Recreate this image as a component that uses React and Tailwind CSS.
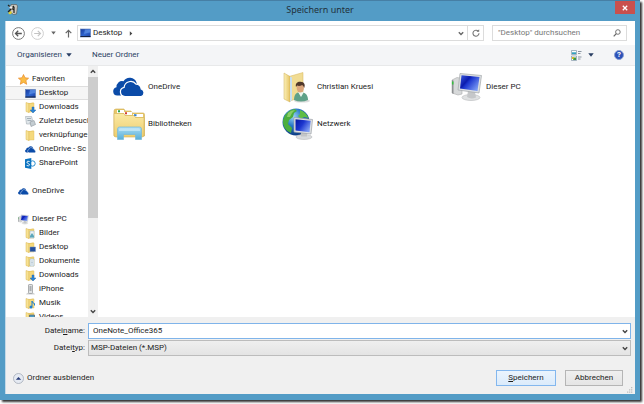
import { useState } from "react";

function Cloud({ className }) {
  return (
    <svg viewBox="0 0 32 20" className={className} aria-hidden="true">
      <path d="M8 18.500H4.200A4.200 4.200 0 0 1 .2 14.500 4.200 4.200 0 0 1 3.500 10.300 5.600 5.600 0 0 1 10.500 4.200 7.200 7.200 0 0 1 23.500 5.500L24 8 14 14Z" fill="#0b4ba8" />
      <path d="M12 19.500a4.600 4.600 0 0 1-.9-9.100 6.600 6.600 0 0 1 11.900-3.200A5.400 5.400 0 0 1 28.200 12a3.900 3.900 0 0 1 0 7.500Z" fill="#0b4ba8" stroke="#fff" strokeWidth="1.200" />
    </svg>
  );
}

function ScreenIcon({ className }) {
  return (
    <svg viewBox="0 0 11 10" className={className} aria-hidden="true">
      <defs>
        <linearGradient id="screen" x1="0" y1="0" x2="1" y2="1">
          <stop offset="0" stopColor="#173a9c" />
          <stop offset=".55" stopColor="#2f66d0" />
          <stop offset="1" stopColor="#1c3f9f" />
        </linearGradient>
      </defs>
      <rect x=".5" y="1" width="10" height="8" fill="url(#screen)" stroke="#5a7ab5" strokeWidth=".6" />
      <path d="M5 1.500h5.200v3Q7 4.500 4 6Z" fill="#5f93e6" opacity=".7" />
      <path d="M.5 8.500h10" stroke="#16233f" />
    </svg>
  );
}

function Folder({ children }) {
  return (
    <svg viewBox="0 0 11 11" className="h-full w-full" aria-hidden="true">
      <path d="M3 1.500 8.500.5v9L3 10.500Z" fill="#e9c65e" />
      <path d="M1 .5 4 1.500v9L1 9.500Z" fill="#f8e294" stroke="#d9b450" strokeWidth=".5" />
      <path d="M4 1.500 9 1v9H4Z" fill="#f5d97d" stroke="#dcb956" strokeWidth=".4" />
      {children}
    </svg>
  );
}

function PcIcon({ className }) {
  return (
    <svg viewBox="0 0 32 30" className={className} aria-hidden="true">
      <defs>
        <linearGradient id="pc" x1="0" y1="0" x2="1" y2=".7">
          <stop offset="0" stopColor="#3d5be0" />
          <stop offset=".4" stopColor="#0b1cae" />
          <stop offset=".5" stopColor="#1c36cf" />
          <stop offset="1" stopColor="#7b9bf4" />
        </linearGradient>
      </defs>
      <path d="m1 8 5-2.500 5 1V22l-4 1-6-2Z" fill="#d7d9da" stroke="#a9abad" strokeWidth=".6" />
      <path d="m1 8 1.500.5V22L1 21Z" fill="#8d9092" />
      <path d="M1.700 9.500v3" stroke="#33c23c" strokeWidth="1.500" />
      <ellipse cx="20" cy="25.500" rx="9" ry="3" fill="#dfe1e2" stroke="#b5b7b9" strokeWidth=".6" />
      <path d="m17 19 7 1 1 5.500q-5 2-9-.5Z" fill="#c5c7c9" />
      <path d="m9 1.500 21.500 2L28 21 7 18Z" fill="#dcdfe2" stroke="#a3a7ab" strokeWidth=".7" />
      <path d="m10.500 3.200 18 1.800-2 14L9 16.500Z" fill="url(#pc)" />
    </svg>
  );
}

function BigFolderUser() {
  return (
    <svg viewBox="0 0 32 32" className="h-8 w-8" aria-hidden="true">
      <defs>
        <linearGradient id="fold" x1="0" y1="0" x2="1" y2="0">
          <stop offset="0" stopColor="#fbf0b9" />
          <stop offset="1" stopColor="#e7c564" />
        </linearGradient>
      </defs>
      <path d="M7 5.500 21 1.500v24L8 30Z" fill="#f1dc93" stroke="#d6b65c" strokeWidth=".5" />
      <path d="m2 2 6 3.500V31l-6-3Z" fill="url(#fold)" stroke="#cfae54" strokeWidth=".5" />
      <path d="m8 5.500 2 1v22.500L8 31Z" fill="#c8dff0" />
      <ellipse cx="20" cy="30" rx="8" ry="1.600" fill="#c5c5c5" opacity=".6" />
      <path d="M12 29c0-6 3-8 6.500-8s7.500 2 7.500 8q-7 3-14 0Z" fill="#5fa188" />
      <path d="m16 21 3 5 3-5Z" fill="#eef5ee" />
      <ellipse cx="18.300" cy="17" rx="3.600" ry="4.600" fill="#dca67c" />
      <path d="M14 16c-1-4 2-5.500 4.500-5.200 4 .2 5 3 3.700 6.200q-.7-2-2-3-3 1.500-5 .5Z" fill="#51382a" />
    </svg>
  );
}

function LibrariesIcon() {
  return (
    <svg viewBox="0 0 32 32" className="h-8 w-8" aria-hidden="true">
      <defs>
        <linearGradient id="lib" x1="0" y1="0" x2="0" y2="1">
          <stop offset="0" stopColor="#fae9a4" />
          <stop offset="1" stopColor="#edcd6e" />
        </linearGradient>
        <linearGradient id="stand" x1="0" y1="0" x2="0" y2="1">
          <stop offset="0" stopColor="#a9dcf3" />
          <stop offset="1" stopColor="#58afd8" />
        </linearGradient>
      </defs>
      <path d="M1 3q0-2 2-2h8l1 2h6l1 2h11q1.500 0 1.500 1.500V28H1Z" fill="#e8c76a" stroke="#cfac4e" strokeWidth=".6" />
      <path d="M4 2h7v3H4Zm7 2h8v3h-8Zm9 2h10v3H20Z" fill="#fff" />
      <path d="M5 2.200h2v2H5Z" fill="#2da44a" />
      <path d="M12 4.200h2v2h-2Z" fill="#d33b30" />
      <path d="M21 6.200h2.500v2H21Z" fill="#2d7fd2" />
      <path d="M1 5.500h10l1 2h9l1.500 2H31V27q0 2-2 2H3q-2 0-2-2Z" fill="url(#lib)" stroke="#d4b35b" strokeWidth=".6" />
      <path d="M4.500 21q0-2 2-2h20q2 0 2 2v10.500h-6V26.500h-12v5h-6Z" fill="url(#stand)" stroke="#75b9d9" strokeWidth=".7" />
      <path d="M6 21.500q0-1.200 1.500-1.200h18q1.500 0 1.500 1.200V23H6Z" fill="#d6f0fb" opacity=".6" />
    </svg>
  );
}

function NetworkIcon() {
  return (
    <svg viewBox="0 0 32 32" className="h-8 w-8" aria-hidden="true">
      <defs>
        <radialGradient id="globe" cx=".4" cy=".3" r=".75">
          <stop offset="0" stopColor="#9bd4f6" />
          <stop offset=".45" stopColor="#2777c8" />
          <stop offset="1" stopColor="#0a3478" />
        </radialGradient>
        <linearGradient id="net" x1="0" y1="0" x2="1" y2=".6">
          <stop offset="0" stopColor="#0816a0" />
          <stop offset=".5" stopColor="#1c36cf" />
          <stop offset="1" stopColor="#7f9df3" />
        </linearGradient>
      </defs>
      <circle cx="14" cy="14" r="13.500" fill="url(#globe)" />
      <path d="M3 7q5-6 10-6l2 2-3 2-1 4-4 3-1 4 4 4-1 5Q0 21 1 12Z" fill="#4cae3d" />
      <path d="M18 2q6 2 8.500 8L22 9l-3 2-3-3 2-2Z" fill="#5fbd45" />
      <path d="M6 5q3-3 7-3l-3 3-2 4-3 0Z" fill="#a2da79" opacity=".7" />
      <ellipse cx="22" cy="29" rx="8" ry="2.500" fill="#d9dbdd" stroke="#b1b3b5" strokeWidth=".5" />
      <path d="m19 24 6 .5v4h-6Z" fill="#c3c5c7" />
      <path d="m12 9.500 18.500 2L29 26l-17-2Z" fill="#dfe2e5" stroke="#9ca0a6" strokeWidth=".7" />
      <path d="m13.500 11.200 15.200 1.600-1.200 11.400-14-1.700Z" fill="url(#net)" />
    </svg>
  );
}

function Star() {
  return (
    <svg viewBox="0 0 11 11" className="h-full w-full" aria-hidden="true">
      <path d="m5.500.5 1.500 3.300 3.600.4-2.700 2.400.8 3.700-3.200-1.900-3.200 1.900.8-3.700L.4 4.200 4 3.800Z" fill="#fbbd45" stroke="#e88a2a" strokeWidth=".7" />
    </svg>
  );
}

function Recent() {
  return (
    <svg viewBox="0 0 11 11" className="h-full w-full" aria-hidden="true">
      <path d="M.5.500h6l1 3.500-1 4H1.500Z" fill="#dfe6ea" stroke="#a5adb3" strokeWidth=".6" />
      <path d="M2 2.500h4m-3.500 2h4" stroke="#8b98a2" strokeWidth=".7" />
      <path d="m5 6 4-1.500 1.500 4L6 10.500Z" fill="#c4cdd2" stroke="#8d969c" strokeWidth=".6" />
    </svg>
  );
}

function SharePoint() {
  return (
    <svg viewBox="0 0 11 11" className="h-full w-full" aria-hidden="true">
      <circle cx="7.500" cy="5.500" r="2.700" fill="none" stroke="#2b8fd0" />
      <path d="M0 1.200 6.300 0v11L0 9.800Z" fill="#0d74c0" />
      <path d="M4.600 3.500Q2 2.600 1.900 4.100q0 1 1.400 1.500 1.500.6 1.200 1.500-.5 1.200-2.800.4" fill="none" stroke="#fff" strokeWidth=".9" />
    </svg>
  );
}

function Phone() {
  return (
    <svg viewBox="0 0 11 11" className="h-full w-full" aria-hidden="true">
      <path d="M2 9h7l1 1.500H1Z" fill="#d2d4d5" />
      <rect x="3.500" y=".5" width="4" height="9" rx=".7" fill="#e2e4e5" stroke="#8f9294" strokeWidth=".7" />
      <path d="M4.500 2h2v5h-2Z" fill="#a9adb0" />
    </svg>
  );
}

const arrowDown = <path d="M7 5v3H5l3 3 3-3H9V5Z" fill="#2b83d4" stroke="#1862ab" strokeWidth=".4" />;
const sheet = <path d="M5 3h4v7H5Z" fill="#edf3f7" stroke="#93adbd" strokeWidth=".5" />;

const tree = [
  {
    label: "Favoriten",
    icon: <Star />,
    items: [
      { label: "Desktop", icon: <ScreenIcon className="h-full w-full" />, selected: true },
      { label: "Downloads", icon: <Folder>{arrowDown}</Folder> },
      { label: "Zuletzt besuch", icon: <Recent /> },
      { label: "verknüpfunge", icon: <Folder /> },
      { label: "OneDrive - Sc", icon: <Cloud className="h-full w-full" /> },
      { label: "SharePoint", icon: <SharePoint /> },
    ],
  },
  { label: "OneDrive", icon: <Cloud className="h-full w-full" />, items: [] },
  {
    label: "Dieser PC",
    icon: <PcIcon className="h-full w-full" />,
    items: [
      { label: "Bilder", icon: <Folder>{sheet}<path d="m5 8 2-3 2 3v1.500H5Z" fill="#5ba6ba" /></Folder> },
      { label: "Desktop", icon: <Folder><path d="M5 5h5.500v4.500H5Z" fill="#244f9e" stroke="#6c8cc0" strokeWidth=".5" /></Folder> },
      { label: "Dokumente", icon: <Folder>{sheet}<path d="M6 5h2M6 6.500h2M6 8h2" stroke="#92a8b8" strokeWidth=".5" /></Folder> },
      { label: "Downloads", icon: <Folder>{arrowDown}</Folder> },
      { label: "iPhone", icon: <Phone /> },
      { label: "Musik", icon: <Folder><path d="M7 3v5.500M7 3q0 2 2.500 2.500v2" fill="none" stroke="#1f7fd2" /><circle cx="6" cy="9" r="1.500" fill="#1f7fd2" /></Folder> },
      { label: "Videos", icon: <Folder><path d="M4.500 3h5v6h-5Z" fill="#4d9ac1" stroke="#53636d" strokeWidth=".7" /></Folder> },
    ],
  },
];

const files = [
  { label: "OneDrive", icon: <Cloud className="h-5 w-8" /> },
  { label: "Christian Kruesi", icon: <BigFolderUser /> },
  { label: "Dieser PC", icon: <PcIcon className="h-8 w-8" /> },
  { label: "Bibliotheken", icon: <LibrariesIcon /> },
  { label: "Netzwerk", icon: <NetworkIcon /> },
];

function Chevron({ className, up }) {
  return (
    <svg viewBox="0 0 6 5" className={className} aria-hidden="true">
      <path d={up ? "m.8 3.800 2.200-2.300 2.200 2.300" : "m.8 1.200 2.200 2.300 2.200-2.300"} fill="none" stroke="currentColor" strokeWidth="1.400" />
    </svg>
  );
}

function Triangle({ className }) {
  return (
    <svg viewBox="0 0 6 4" className={className} aria-hidden="true">
      <path d="M.3.300h5.400L3 3.700Z" fill="currentColor" />
    </svg>
  );
}

function TreeRow({ item, nested }) {
  return (
    <li>
      <button
        type="button"
        className={`flex h-[14px] w-full items-center gap-[3px] whitespace-nowrap text-left ${nested ? "pl-[19px]" : "pl-3"} ${item.selected ? "border-y border-[#dedede] bg-[#f5f5f5]" : ""}`}
      >
        <span className="h-[11px] w-[11px] shrink-0">{item.icon}</span>
        {item.label}
      </button>
    </li>
  );
}

export default function App() {
  const [name, setName] = useState("OneNote_Office365");
  const [query, setQuery] = useState("");

  return (
    <div className="h-screen overflow-hidden bg-white pr-1 pb-1 font-['Roboto','Open_Sans',sans-serif] text-[8px] leading-[12px] text-[#1c1c1c]">
      <div className="flex h-full flex-col border-t border-[#467fa5] bg-[#539cc6] px-[5px] pb-[6px] shadow-[2px_2px_2px_#333]">
        <header className="grid h-5 shrink-0 grid-cols-[1fr_auto_1fr] items-start">
          <svg viewBox="0 0 11 11" className="mt-[3px] ml-[2px] h-[11px] w-[11px]" aria-hidden="true">
            <path d="M4 .5h5.500l1 1.500-1 8-3 .5L3 8Z" fill="#c9c7bf" stroke="#55534d" strokeWidth=".6" />
            <path d="m1 1 6 5M1 8l6-6M7 3v6" stroke="#25231d" strokeWidth="1.200" />
            <path d="m1 9 3-2 1 2-2 1.500Z" fill="#e2d02c" />
            <path d="m2 3 2-1 2 2-2 1Z" fill="#eee" />
          </svg>
          <h1 className="mt-[2px] font-['Noto_Sans','Open_Sans',sans-serif] text-[9px] leading-[14px] text-[#22313b]">Speichern unter</h1>
          <button type="button" aria-label="Schließen" className="flex h-[13px] w-5 items-center justify-center justify-self-end bg-[#c9504d]">
            <svg viewBox="0 0 6 6" className="h-[6px] w-[6px]"><path d="m.8.8 4.400 4.400m0-4.400L.8 5.200" stroke="#fff" strokeWidth="1.300" /></svg>
          </button>
        </header>

        <main className="flex min-h-0 flex-1 flex-col border-l border-[#c3d9e8] bg-white">
          <nav className="flex h-6 shrink-0 items-center pr-2 pl-[6px]" aria-label="Adresse">
            <button type="button" aria-label="Zurück" className="h-[13px] w-[13px]">
              <svg viewBox="0 0 13 13"><circle cx="6.500" cy="6.500" r="5.900" fill="none" stroke="#6b6b6b" strokeWidth=".9" /><path d="M9.800 6.500H3.700M6.200 3.800 3.500 6.500l2.700 2.700" fill="none" stroke="#555" strokeWidth="1.300" /></svg>
            </button>
            <button type="button" aria-label="Vorwärts" className="ml-[6px] h-[13px] w-[13px]">
              <svg viewBox="0 0 13 13"><circle cx="6.500" cy="6.500" r="5.900" fill="none" stroke="#c9c9c9" strokeWidth=".9" /><path d="M3.200 6.500h6.100M6.800 3.800l2.700 2.700-2.700 2.700" fill="none" stroke="#c4c4c4" strokeWidth="1.200" /></svg>
            </button>
            <button type="button" aria-label="Verlauf" className="ml-[7px]"><Triangle className="h-[4px] w-[5px] text-[#666]" /></button>
            <button type="button" aria-label="Nach oben" className="ml-2 h-[9px] w-[9px]">
              <svg viewBox="0 0 9 9"><path d="M4.500 8.500V1.500M1.700 4.200 4.500 1.400l2.800 2.800" fill="none" stroke="#666" strokeWidth="1.200" /></svg>
            </button>
            <div className="ml-1 flex h-4 flex-1 items-center border border-[#dcdcdc]">
              <ScreenIcon className="ml-[2px] h-[10px] w-[11px]" />
              <button type="button" className="ml-[2px]">Desktop</button>
              <svg viewBox="0 0 4 5" className="ml-[7px] h-[5px] w-[4px]" aria-hidden="true"><path d="M.8.300 3.300 2.500.8 4.700Z" fill="#444" /></svg>
              <button type="button" aria-label="Frühere Orte" className="ml-auto mr-[3px]"><Chevron className="h-[5px] w-[6px] text-[#666]" /></button>
              <button type="button" aria-label="Aktualisieren" className="flex h-full w-4 items-center justify-center border-l border-[#dcdcdc]">
                <svg viewBox="0 0 8 8" className="h-2 w-2"><path d="M6.300 2.300A3 3 0 1 0 7 4.300" fill="none" stroke="#777" strokeWidth="1.100" /><path d="M4.500 2.800h2.700V.2Z" fill="#777" /></svg>
              </button>
            </div>
            <div className="ml-2 flex h-4 w-[135px] items-center border border-[#dcdcdc] px-[5px]">
              <input
                aria-label="Desktop durchsuchen"
                placeholder={'"Desktop" durchsuchen'}
                value={query}
                onChange={(e) => setQuery(e.target.value)}
                className="min-w-0 flex-1 outline-none placeholder:text-[#777]"
              />
              <svg viewBox="0 0 8 8" className="h-2 w-2" aria-hidden="true"><circle cx="4.900" cy="3" r="2.300" fill="none" stroke="#666" strokeWidth=".9" /><path d="M3.300 4.700.7 7.400" stroke="#666" strokeWidth="1.200" /></svg>
            </div>
          </nav>

          <div className="flex h-[21px] shrink-0 items-center border-b border-[#e8e9ea] bg-[#f4f5f7] px-[11px] text-[#2a3e63]">
            <button type="button" className="flex items-center gap-1">Organisieren<Triangle className="h-[4px] w-[6px]" /></button>
            <button type="button" className="ml-5">Neuer Ordner</button>
            <button type="button" aria-label="Ansicht" className="ml-auto flex items-center gap-[6px]">
              <svg viewBox="0 0 11 11" className="h-[11px] w-[11px]" aria-hidden="true">
                <path d="M.5.500h5v4h-5Zm0 5.500h5v4.500h-5Z" fill="#fff" stroke="#7f96a8" strokeWidth=".7" />
                <path d="M1 2.300h4V4H1Z" fill="#32a0bd" /><path d="M1 7h2v2H1Z" fill="#e0bf26" /><path d="M3 7.500h2V10H2Z" fill="#3c9842" />
                <path d="M7 1.500h3.500M7 3.500h2.500M7 7h3.500M7 9h2.500" stroke="#8b96a3" />
              </svg>
              <Triangle className="h-[4px] w-[6px]" />
            </button>
            <button type="button" aria-label="Hilfe" className="ml-5 flex h-[10px] w-[10px] items-center justify-center rounded-full border border-[#8a9fd2] bg-[#2b51b8] text-[8px] font-bold leading-none text-white">?</button>
          </div>

          <div className="flex min-h-0 flex-1">
            <aside className="flex w-[92px] shrink-0">
              <div className="min-w-0 flex-1 overflow-hidden pt-[6px]">
                {tree.map((group) => (
                  <ul key={group.label} className="mb-[14px]">
                    <TreeRow item={group} />
                    {group.items.map((item) => <TreeRow key={item.label} item={item} nested />)}
                  </ul>
                ))}
              </div>
              <div className="flex w-[10px] shrink-0 flex-col items-center bg-[#f0f0f0] text-[#444]">
                <span className="flex h-[11px] items-center"><Chevron up className="h-[5px] w-[6px]" /></span>
                <span className="h-[56%] w-full bg-[#cdcdcd]" />
                <span className="mt-auto flex h-[11px] items-center"><Chevron className="h-[5px] w-[6px]" /></span>
              </div>
            </aside>
            <ul className="grid flex-1 auto-rows-[37px] grid-cols-[repeat(auto-fill,169px)] content-start pt-[2px] pl-[15px]">
              {files.map((f) => (
                <li key={f.label}>
                  <button type="button" className="flex h-full items-center gap-[3px] text-left">{f.icon}{f.label}</button>
                </li>
              ))}
            </ul>
          </div>

          <footer className="shrink-0 bg-[#f0f0f0] pt-[6px]">
            <div className="grid grid-cols-[79px_1fr] items-center gap-x-[3px] gap-y-px pr-1">
              <label htmlFor="name" className="text-right">Datei<u>n</u>ame:</label>
              <div className="flex h-4 items-center border border-[#7fb4ea] bg-white pl-1 pr-[2px]">
                <input id="name" value={name} onChange={(e) => setName(e.target.value)} className="min-w-0 flex-1 outline-none" />
                <Chevron className="h-[5px] w-[6px] text-[#444]" />
              </div>
              <label htmlFor="type" className="text-right">Datei<u>t</u>yp:</label>
              <div className="flex h-4 items-center border border-[#bcbcbc] bg-linear-to-b from-[#efefef] to-[#e4e4e4] px-[2px]">
                <select id="type" className="min-w-0 flex-1 appearance-none outline-none">
                  <option>MSP-Dateien (*.MSP)</option>
                </select>
                <Chevron className="h-[5px] w-[6px] text-[#444]" />
              </div>
            </div>
            <div className="mt-[14px] flex items-center pl-[7px] pr-3">
              <button type="button" className="flex items-center gap-[3px]">
                <svg viewBox="0 0 11 11" className="h-[11px] w-[11px]" aria-hidden="true"><circle cx="5.500" cy="5.500" r="5" fill="#e5eaf2" stroke="#a5acb7" strokeWidth=".8" /><path d="M2.800 6.700 5.500 4l2.700 2.700Z" fill="#283c78" /></svg>
                Ordner ausblenden
              </button>
              <button type="button" className="ml-auto h-4 w-[60px] border border-[#83b7ee] bg-linear-to-b from-[#ebf4fd] to-[#dbebfb]"><u>S</u>peichern</button>
              <button type="button" className="ml-[9px] h-4 w-[58px] border border-[#b5b5b5] bg-linear-to-b from-[#efefef] to-[#e5e5e5]">Abbrechen</button>
            </div>
            <div className="flex justify-end pt-px pr-[2px] pb-px">
              <svg viewBox="0 0 6 6" className="h-[6px] w-[6px]" aria-hidden="true"><path d="M4 0h1.300v1.300H4ZM4 2.200h1.300v1.300H4ZM4 4.400h1.300v1.300H4ZM2 2.200h1.300v1.300H2ZM2 4.400h1.300v1.300H2ZM0 4.400h1.300v1.300H0Z" fill="#bdbdbd" /></svg>
            </div>
          </footer>
        </main>
      </div>
    </div>
  );
}
